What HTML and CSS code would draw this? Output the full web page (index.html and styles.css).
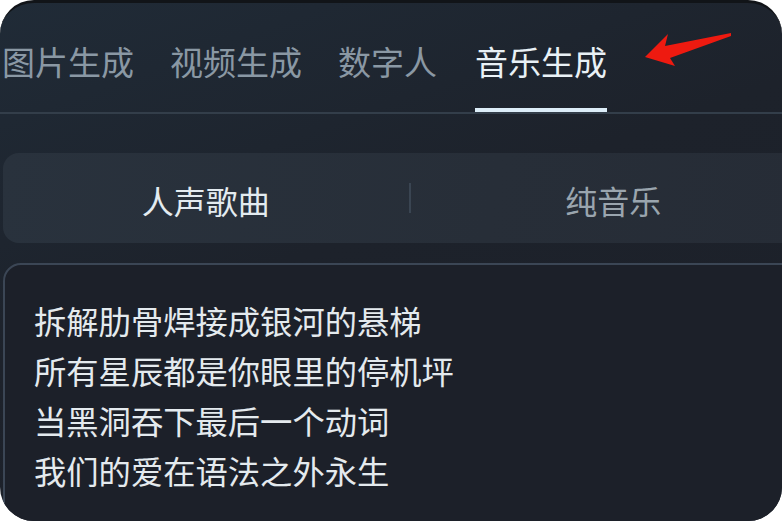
FILE: index.html
```html
<!DOCTYPE html>
<html lang="zh-CN">
<head>
<meta charset="utf-8">
<title>音乐生成</title>
<link rel="stylesheet" href="styles.css">
</head>
<body>
<div class="frame">
  <nav class="tabs">
    <span class="tab">图片生成</span>
    <span class="tab">视频生成</span>
    <span class="tab">数字人</span>
    <span class="tab active">音乐生成</span>
  </nav>
  <svg class="arrow" width="100" height="50" viewBox="640 25 100 50" aria-hidden="true">
    <polygon points="645,57 668,34 665,46 731,33 731,36 670,58 675,66" fill="#ee1a10"/>
  </svg>
  <div class="segment">
    <span class="seg-item selected">人声歌曲</span>
    <span class="seg-divider"></span>
    <span class="seg-item">纯音乐</span>
  </div>
  <div class="lyrics">
    <p>拆解肋骨焊接成银河的悬梯</p>
    <p>所有星辰都是你眼里的停机坪</p>
    <p>当黑洞吞下最后一个动词</p>
    <p>我们的爱在语法之外永生</p>
  </div>
</div>
</body>
</html>
```

FILE: styles.css
```css
* { box-sizing: border-box; }
html, body {
  margin: 0;
  padding: 0;
  background: #ffffff;
}
body {
  font-family: "Noto Sans CJK SC", "Noto Sans", sans-serif;
}
.frame {
  position: relative;
  width: 782px;
  height: 521px;
  border-radius: 34px;
  overflow: hidden;
  background: linear-gradient(160deg, #202b37 0%, #1d222b 45%, #1c2029 100%);
  border-top: 3px solid #111418;
}
.tabs {
  display: flex;
  gap: 36px;
  padding: 42px 0 0 2px;
  border-bottom: 2px solid #333e4a;
  width: 900px;
}
.tab {
  font-size: 33px;
  line-height: 32px;
  color: #8a98a4;
  padding-bottom: 31px;
  border-bottom: 4px solid transparent;
  white-space: nowrap;
}
.tab.active {
  margin-left: 2px;
  color: #e9f1f6;
  border-bottom-color: #dcedf8;
}
.arrow {
  position: absolute;
  left: 640px;
  top: 22px;
}
.segment {
  display: flex;
  align-items: center;
  width: 813px;
  height: 90px;
  margin: 39px 0 0 3px;
  border-radius: 16px;
  background: linear-gradient(100deg, #29323d 0%, #272e38 60%, #262c36 100%);
}
.seg-item {
  flex: 1;
  text-align: center;
  font-size: 32px;
  line-height: 32px;
  color: #9aa5ae;
  padding-top: 4px;
}
.seg-item.selected {
  color: #e3ebf0;
}
.seg-divider {
  width: 2px;
  height: 30px;
  background: #3a4552;
}
.lyrics {
  width: 900px;
  height: 300px;
  margin: 20px 0 0 3px;
  border: 2px solid #3b4655;
  border-radius: 18px;
  background: #1c2029;
  padding: 30px 0 0 29px;
}
.lyrics p {
  margin: 0;
  font-size: 32.3px;
  line-height: 50px;
  color: #e4eaee;
  white-space: nowrap;
}
```
